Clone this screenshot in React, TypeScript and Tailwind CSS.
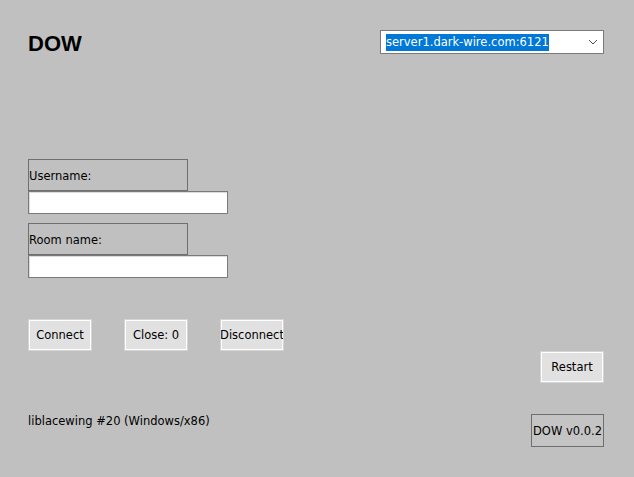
import React from 'react';

const bodyFont = { fontFamily: '"DejaVu Sans", Verdana, sans-serif' };

// Win32-style push button
const PushButton = ({ label }: { label: string }) => (
  <button
    type="button"
    className="flex h-[32px] w-[64px] items-center justify-center overflow-hidden whitespace-nowrap border border-[#d4d4d4] bg-[#e1e1e1] text-[11.5px] leading-[14px] text-black shadow-[inset_0_0_0_1px_#ffffff]"
  >
    {label}
  </button>
);

const FieldGroup = ({ label }: { label: string }) => (
  <div className="flex flex-col">
    <div className="h-[32px] w-[160px] border border-[#707070] pt-[9px] text-[11.5px] leading-[14px] text-black">
      {label}
    </div>
    <input
      type="text"
      className="h-[23px] w-[200px] border border-[#7a7a7a] bg-white shadow-[inset_1px_1px_0_#dcdcdc] outline-none"
    />
  </div>
);

const App = () => {
  return (
    <div
      className="flex h-[477px] w-[634px] flex-col overflow-hidden bg-[#c0c0c0] text-black"
      style={bodyFont}
    >
      {/* Header */}
      <div className="flex items-start justify-between pl-[28px] pr-[30px] pt-[30px]">
        <h1
          className="mt-[3px] text-[22px] font-bold leading-[22px]"
          style={{ fontFamily: '"Liberation Sans", Arial, sans-serif' }}
        >
          DOW
        </h1>
        <div className="flex h-[24px] w-[224px] items-center justify-between border border-[#7a7a7a] bg-white pl-[5px] pr-[3px]">
          <span className="h-[17px] whitespace-nowrap bg-[#0078d7] text-[11.5px] leading-[17px] text-white">
            server1.dark-wire.com:6121
          </span>
          <svg width="10" height="6" viewBox="0 0 10 6" className="mr-[2px]">
            <path d="M1 1 L5 5 L9 1" fill="none" stroke="#505050" strokeWidth="1" />
          </svg>
        </div>
      </div>

      {/* Login form */}
      <div className="mt-[104px] flex flex-col gap-[9px] pl-[28px]">
        <FieldGroup label="Username:" />
        <FieldGroup label="Room name:" />
      </div>

      {/* Actions */}
      <div className="mt-[41px] flex gap-[32px] pl-[28px]">
        <PushButton label="Connect" />
        <PushButton label="Close: 0" />
        <PushButton label="Disconnect" />
      </div>

      <div className="flex justify-end pr-[30px]">
        <PushButton label="Restart" />
      </div>

      {/* Footer */}
      <div className="mt-[31px] flex items-start justify-between pl-[28px] pr-[30px]">
        <span className="text-[11.5px] leading-[14px]">liblacewing #20 (Windows/x86)</span>
        <div className="flex h-[33px] w-[73px] items-center justify-center overflow-hidden whitespace-nowrap border border-[#6e6e6e] bg-[#c4c4c4] text-[11.5px] leading-[14px]">
          DOW v0.0.2
        </div>
      </div>
    </div>
  );
};

export default App;
